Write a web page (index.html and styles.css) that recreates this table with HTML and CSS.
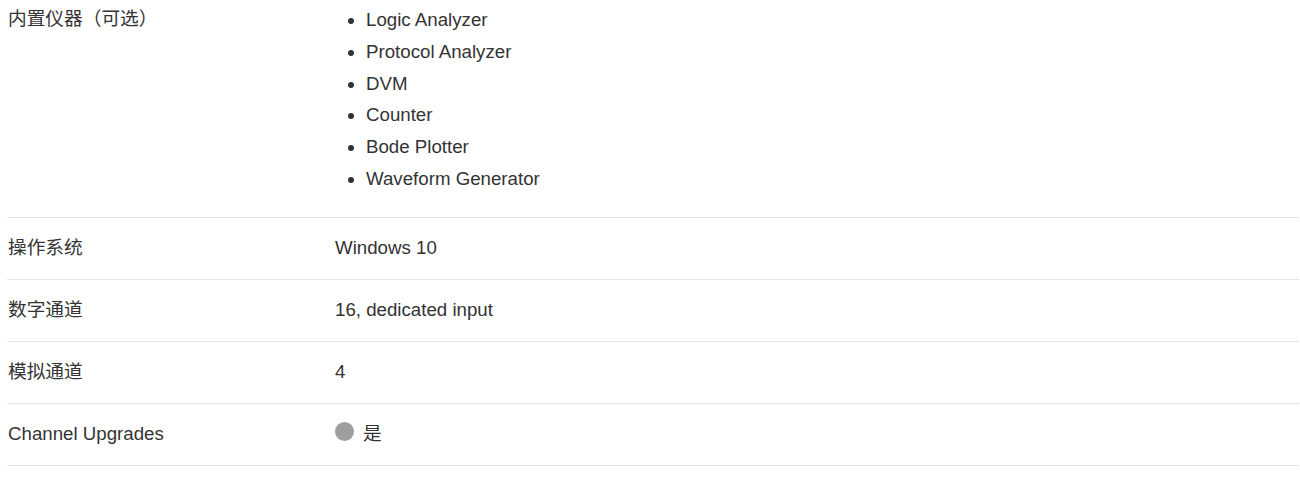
FILE: index.html
```html
<!DOCTYPE html>
<html lang="zh">
<head>
<meta charset="utf-8">
<link rel="stylesheet" href="styles.css">
</head>
<body>
<div class="specs">
  <div class="row row-first">
    <div class="label">内置仪器（可选）</div>
    <div class="value">
      <ul class="list">
        <li>Logic Analyzer</li>
        <li>Protocol Analyzer</li>
        <li>DVM</li>
        <li>Counter</li>
        <li>Bode Plotter</li>
        <li>Waveform Generator</li>
      </ul>
    </div>
  </div>
  <div class="row">
    <div class="label">操作系统</div>
    <div class="value">Windows 10</div>
  </div>
  <div class="row">
    <div class="label">数字通道</div>
    <div class="value">16, dedicated input</div>
  </div>
  <div class="row">
    <div class="label">模拟通道</div>
    <div class="value">4</div>
  </div>
  <div class="row">
    <div class="label">Channel Upgrades</div>
    <div class="value"><span class="dot"></span>是</div>
  </div>
</div>
</body>
</html>
```

FILE: styles.css
```css
html, body {
  margin: 0;
  padding: 0;
  background: #fff;
}
body {
  font-family: "Liberation Sans", Arial, "Noto Sans CJK SC", sans-serif;
  font-size: 18.7px;
  color: #333;
}
.specs {
  margin-left: 7px;
  width: 1292px;
}
.row {
  display: grid;
  grid-template-columns: 328px 1fr;
  align-items: start;
  border-bottom: 1px solid #e5e5e5;
  padding: 17px 0 18px;
  line-height: 26px;
}
.row-first {
  padding: 6px 0 22px;
}
.label {
  padding-left: 1px;
}
.value {
  display: flex;
  align-items: center;
}
.list {
  margin: -2px 0 0;
  padding-left: 31px;
  line-height: 31.8px;
}
.dot {
  display: inline-block;
  width: 19px;
  height: 19px;
  border-radius: 50%;
  background: #9e9e9e;
  margin-right: 9px;
  position: relative;
  top: -2px;
}
```
